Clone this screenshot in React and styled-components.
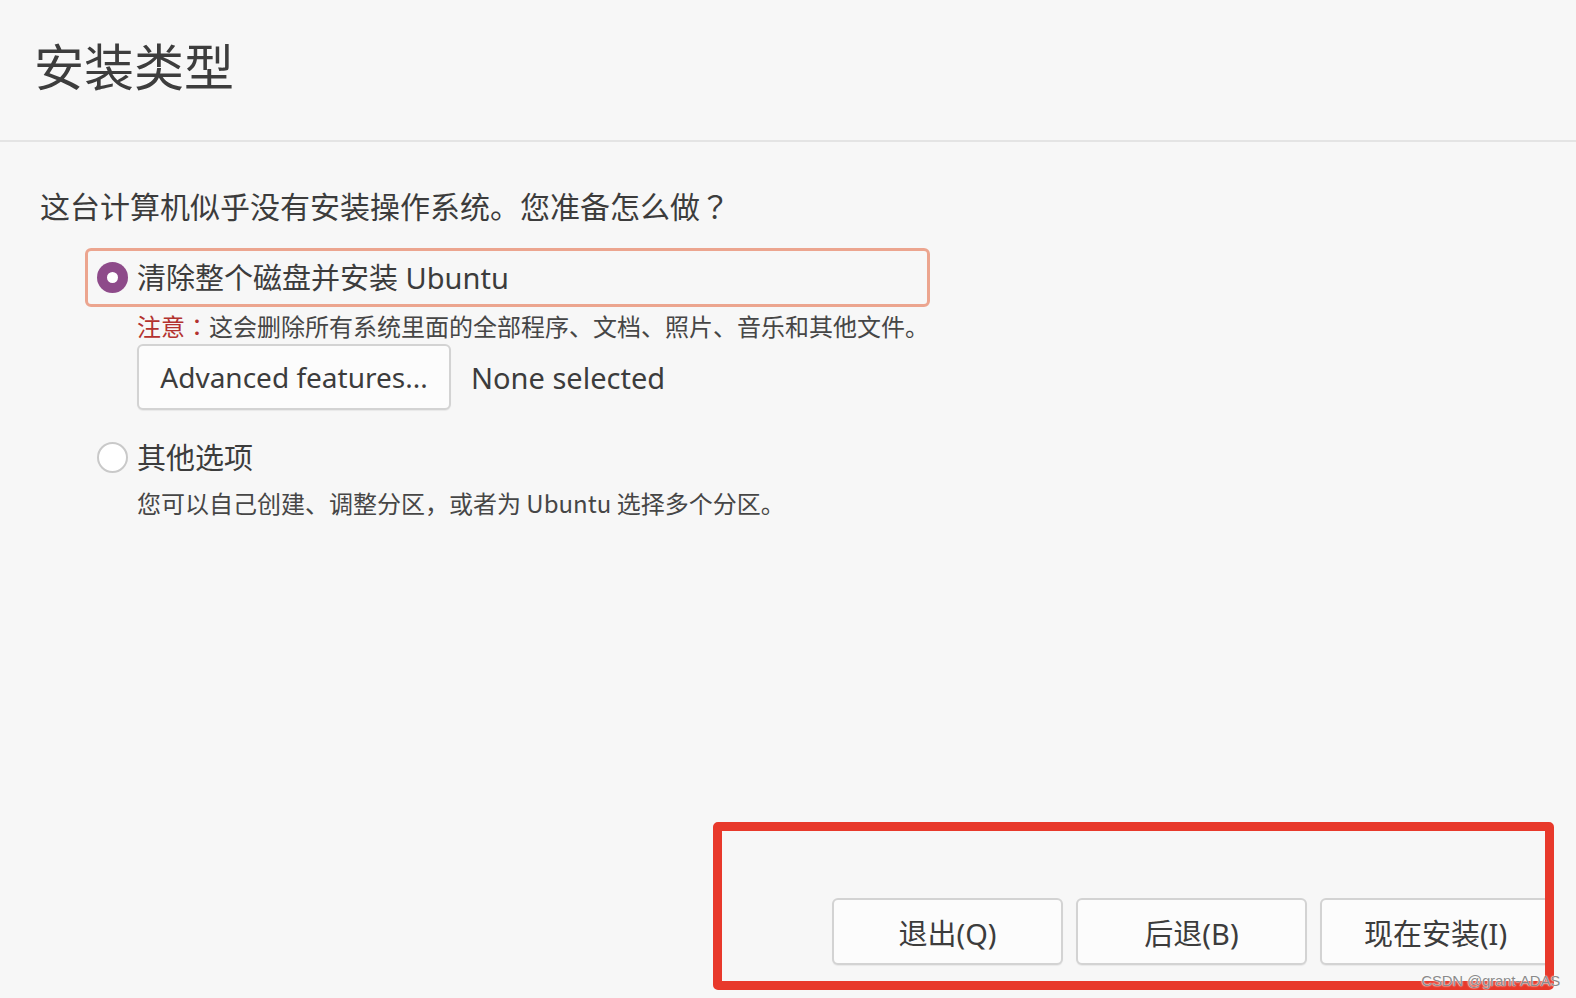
import React from "react";
import styled, { createGlobalStyle } from "styled-components";

const GlobalStyle = createGlobalStyle`
  html, body {
    margin: 0;
    padding: 0;
    background: #f7f7f7;
  }
  body {
    font-family: "Noto Sans", "Noto Sans CJK SC", sans-serif;
    color: #3c3c3c;
  }
`;

const Page = styled.div`
  position: relative;
  width: 1576px;
  height: 998px;
  display: flex;
  flex-direction: column;
  overflow: hidden;
  background: #f7f7f7;
`;

const Header = styled.header`
  height: 142px;
  display: flex;
  align-items: center;
  padding: 0 0 13px 34px;
  box-sizing: border-box;
  border-bottom: 2px solid #e4e4e4;
`;

const Title = styled.h1`
  margin: 0;
  font-family: "Noto Sans CJK SC", sans-serif;
  font-size: 50px;
  font-weight: 400;
  color: #3d3d3d;
  line-height: 58px;
`;

const Content = styled.main`
  padding-left: 40px;
`;

const Question = styled.p`
  margin: 43px 0 0;
  font-family: "Noto Sans CJK SC", sans-serif;
  font-size: 30px;
  line-height: 40px;
  color: #3c3c3c;
`;

// centred full-width punctuation (：？) as drawn by the installer
const Punct = styled.span`
  font-family: "Noto Sans CJK JP", "Noto Sans CJK SC", sans-serif;
`;

const Options = styled.div`
  margin: 23px 0 0 45px;
  display: flex;
  flex-direction: column;
`;

const OptionRow = styled.div`
  width: 845px;
  height: 59px;
  box-sizing: border-box;
  border: 3px solid ${(p) => (p.$selected ? "#eca58f" : "transparent")};
  border-radius: 6px;
  display: flex;
  align-items: center;
  padding-left: 9px;
  gap: 9px;
  margin-top: ${(p) => p.$gap || 0}px;
`;

const Radio = styled.span`
  width: 31px;
  height: 31px;
  border-radius: 50%;
  box-sizing: border-box;
  flex-shrink: 0;
  ${(p) =>
    p.$checked
      ? `
    background: #8e4b8a;
    display: flex;
    align-items: center;
    justify-content: center;
    &::after {
      content: "";
      width: 11px;
      height: 11px;
      border-radius: 50%;
      background: #fff;
    }
  `
      : `
    background: #fff;
    border: 2px solid #c9c9c9;
  `}
`;

const OptionLabel = styled.span`
  font-size: 29px;
  line-height: 40px;
  color: #3c3c3c;
`;

const Detail = styled.div`
  margin: ${(p) => p.$top || 0}px 0 0 52px;
  font-family: "Noto Sans CJK SC", sans-serif;
  font-size: 24px;
  line-height: 30px;
  color: #464646;
`;

const Warn = styled.span`
  color: #b3322f;
`;

const FeatureRow = styled.div`
  margin: 3px 0 0 52px;
  display: flex;
  align-items: center;
  gap: 20px;
`;

const Button = styled.button`
  width: ${(p) => p.$w || 231}px;
  height: ${(p) => p.$h || 67}px;
  box-sizing: border-box;
  background: #fcfcfc;
  border: 2px solid #d3d3d3;
  border-radius: 6px;
  box-shadow: 0 1px 1px rgba(0, 0, 0, 0.06);
  font-family: "Noto Sans", "Noto Sans CJK SC", sans-serif;
  font-size: ${(p) => p.$fs || 29}px;
  color: #3c3c3c;
  padding: 0;
  display: flex;
  align-items: center;
  justify-content: center;
`;

const Muted = styled.span`
  font-size: 29px;
  color: #3c3c3c;
`;

const Footer = styled.footer`
  margin-top: auto;
  display: flex;
  justify-content: flex-end;
  gap: 13px;
  padding: 0 25px 33px 0;
`;

const Annotation = styled.div`
  position: absolute;
  left: 713px;
  top: 822px;
  width: 841px;
  height: 168px;
  box-sizing: border-box;
  border: 9px solid #e8392b;
  border-radius: 5px;
  pointer-events: none;
`;

const Watermark = styled.div`
  position: absolute;
  right: 16px;
  bottom: 9px;
  font-family: "Liberation Sans", Arial, sans-serif;
  font-size: 15px;
  color: #8a8a8a;
  text-shadow: 0 0 2px #fff, 0 0 1px #fff;
  letter-spacing: -0.2px;
`;

export default function App() {
  return (
    <>
      <GlobalStyle />
      <Page>
        <Header>
          <Title>安装类型</Title>
        </Header>
        <Content>
          <Question>
            这台计算机似乎没有安装操作系统。您准备怎么做<Punct>？</Punct>
          </Question>
          <Options>
            <OptionRow $selected>
              <Radio $checked />
              <OptionLabel>清除整个磁盘并安装 Ubuntu</OptionLabel>
            </OptionRow>
            <Detail $top={4}>
              <Warn>
                注意<Punct>：</Punct>
              </Warn>
              这会删除所有系统里面的全部程序、文档、照片、音乐和其他文件。
            </Detail>
            <FeatureRow>
              <Button $w={314} $h={66} $fs={28}>Advanced features...</Button>
              <Muted>None selected</Muted>
            </FeatureRow>
            <OptionRow $gap={18}>
              <Radio />
              <OptionLabel>其他选项</OptionLabel>
            </OptionRow>
            <Detail $top={1}>您可以自己创建、调整分区，或者为 Ubuntu 选择多个分区。</Detail>
          </Options>
        </Content>
        <Footer>
          <Button>退出(Q)</Button>
          <Button>后退(B)</Button>
          <Button>现在安装(I)</Button>
        </Footer>
        <Annotation />
        <Watermark>CSDN @grant-ADAS</Watermark>
      </Page>
    </>
  );
}
